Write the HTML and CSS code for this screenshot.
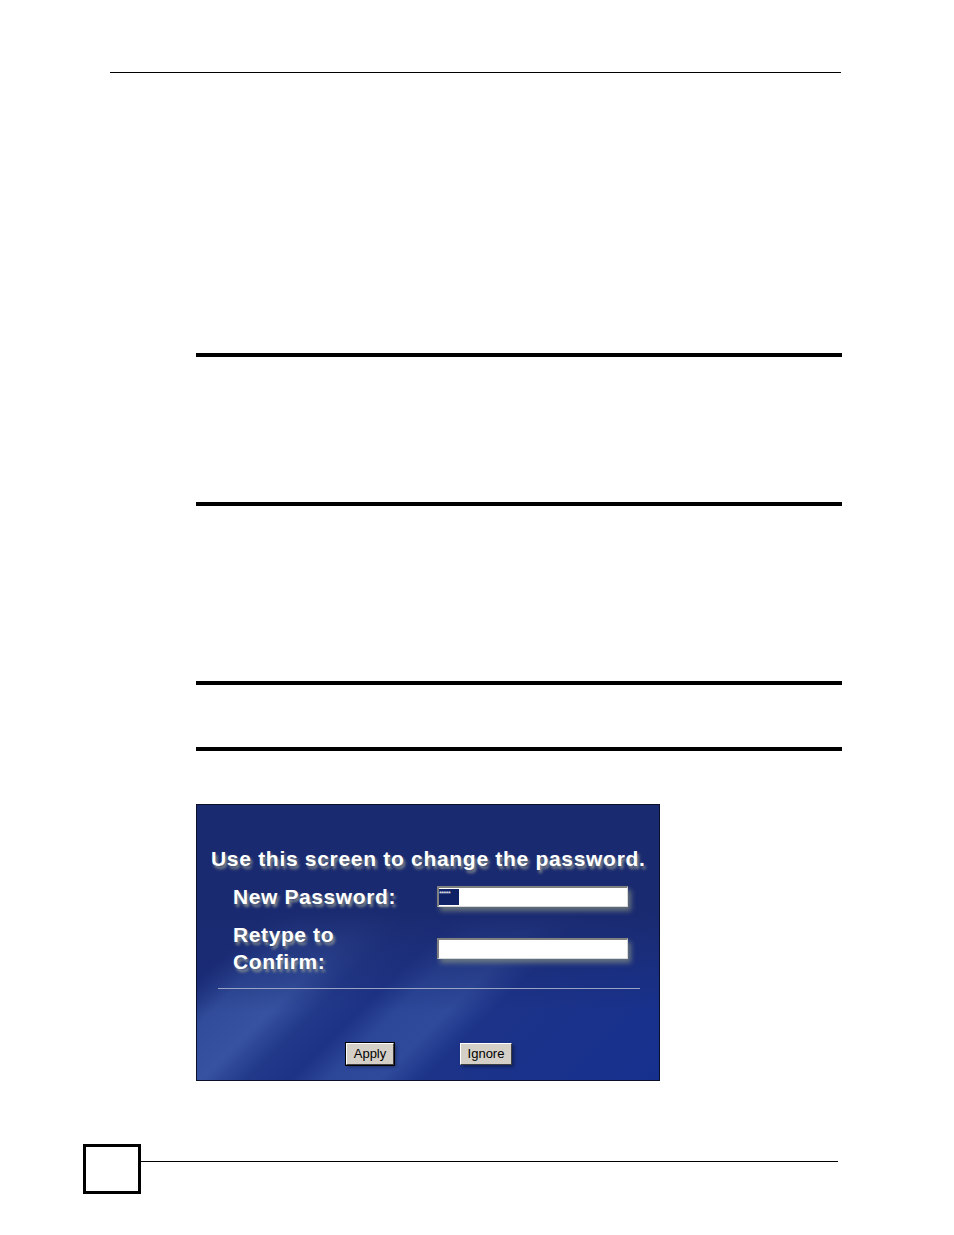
FILE: index.html
```html
<!DOCTYPE html>
<html>
<head>
<meta charset="utf-8">
<link rel="stylesheet" href="styles.css">
</head>
<body>
<div class="page">
  <div class="header-rule"></div>
  <div class="content">
    <div class="rule rule-1"></div>
    <div class="rule rule-2"></div>
    <div class="rule rule-3"></div>
    <div class="rule rule-4"></div>
    <div class="panel">
      <div class="panel-title">Use this screen to change the password.</div>
      <div class="form">
        <div class="label">New Password:</div>
        <div class="field"><span class="sel">*****</span></div>
        <div class="label two">Retype to<br>Confirm:</div>
        <div class="field"></div>
      </div>
      <div class="divider"></div>
      <div class="buttons">
        <button class="btn default">Apply</button>
        <button class="btn ignore">Ignore</button>
      </div>
    </div>
  </div>
  <div class="footer">
    <div class="page-box"></div>
    <div class="footer-rule"></div>
  </div>
</div>
</body>
</html>
```

FILE: styles.css
```css
html, body {
  margin: 0;
  padding: 0;
  background: #ffffff;
}
.page {
  width: 954px;
  padding-top: 72px;
  font-family: "Liberation Sans", Arial, sans-serif;
}
.header-rule {
  margin-left: 110px;
  width: 731px;
  height: 1px;
  background: #000;
}
.content {
  padding-left: 196px;
}
.rule {
  width: 646px;
  height: 4px;
  background: #000;
}
.rule-1 { margin-top: 280px; }
.rule-2 { margin-top: 145px; }
.rule-3 { margin-top: 175px; }
.rule-4 { margin-top: 62px; }

.panel {
  margin-top: 53px;
  width: 462px;
  height: 275px;
  border: 1px solid #0a0f2a;
  background:
    linear-gradient(to bottom, #1a2a70 0%, #1a2a70 38%, rgba(26,42,112,0) 75%),
    linear-gradient(135deg,
      #1a2c78 0%, #1a2c78 24%,
      #314c9a 30%, #3652a0 38%, #22398a 44%,
      #1d3386 50%, #2c4798 55%, #2f4a9a 62%,
      #1c3388 68%, #16308e 100%);
  color: #fff;
  overflow: hidden;
}
.panel-title {
  margin: 42px 0 0 14px;
  font-size: 21px;
  font-weight: bold;
  line-height: 24px;
  letter-spacing: 0.7px;
  white-space: nowrap;
  text-shadow: 2px 3px 3px rgba(170,175,150,0.75);
}
.form {
  display: grid;
  grid-template-columns: 204px 191px;
  margin: 12px 0 0 36px;
  row-gap: 11px;
  align-items: center;
}
.label {
  font-size: 21px;
  font-weight: bold;
  line-height: 27px;
  letter-spacing: 0.6px;
  text-shadow: 2px 3px 3px rgba(170,175,150,0.75);
}
.field {
  height: 18px;
  background: #fff;
  border-top: 2px solid #808080;
  border-left: 2px solid #808080;
  border-right: 1px solid #d8d8d8;
  border-bottom: 1px solid #d8d8d8;
  box-shadow: 3px 4px 5px rgba(150,160,130,0.6);
  display: flex;
  align-items: stretch;
}
.sel {
  width: 20px;
  background: #102266;
  color: #fff;
  font-size: 7px;
  line-height: 10px;
  letter-spacing: -0.5px;
  overflow: hidden;
  margin: 1px 0;
}
.divider {
  margin: 13px 0 0 21px;
  width: 422px;
  height: 1px;
  background: #9aa3c4;
}
.buttons {
  display: flex;
  margin: 54px 0 0 149px;
}
.btn {
  font-family: "Liberation Sans", Arial, sans-serif;
  font-size: 13px;
  height: 22px;
  padding: 0;
  background: #d4d0c8;
  color: #000;
  border: 1px solid;
  border-color: #fff #404040 #404040 #fff;
  box-shadow: 2px 2px 3px rgba(0,0,0,0.35);
  line-height: 18px;
  text-align: center;
}
.btn.default {
  width: 48px;
  outline: 1px solid #000;
}
.btn.ignore {
  width: 52px;
  margin-left: 66px;
}

.footer {
  display: flex;
  align-items: flex-start;
  margin: 63px 0 0 83px;
  padding-bottom: 40px;
}
.page-box {
  width: 52px;
  height: 44px;
  border: 3px solid #000;
  flex: none;
}
.footer-rule {
  margin-top: 17px;
  width: 697px;
  height: 1px;
  background: #000;
}
```
